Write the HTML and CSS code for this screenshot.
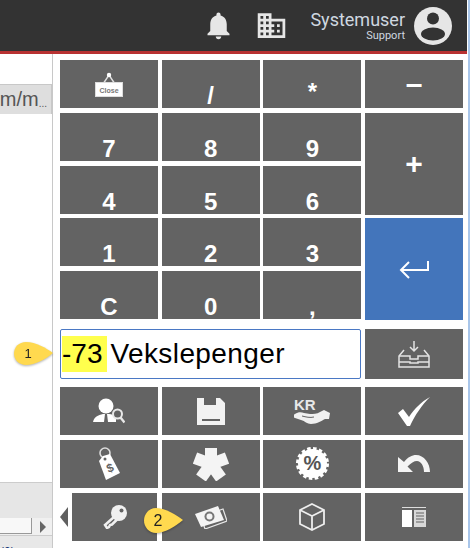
FILE: index.html
```html
<!DOCTYPE html>
<html>
<head>
    <title>Kasse</title>
    <link rel="stylesheet" href="styles.css">
</head>
<body>
    <div class="page">
        <header class="topbar">
            <svg class="bar-icon bell" viewBox="0 0 24 24"><path d="M12 22c1.1 0 2-.9 2-2h-4c0 1.1.89 2 2 2zm6-6v-5c0-3.07-1.64-5.64-4.5-6.32V4c0-.83-.67-1.5-1.5-1.5s-1.5.67-1.5 1.5v.68C7.63 5.36 6 7.92 6 11v5l-2 2v1h16v-1l-2-2z"/></svg>
            <svg class="bar-icon building" viewBox="0 0 24 24"><path d="M12 7V3H2v18h20V7H12zM6 19H4v-2h2v2zm0-4H4v-2h2v2zm0-4H4V9h2v2zm0-4H4V5h2v2zm4 12H8v-2h2v2zm0-4H8v-2h2v2zm0-4H8V9h2v2zm0-4H8V5h2v2zm10 12h-8v-2h2v-2h-2v-2h2v-2h-2V9h8v10zm-2-8h-2v2h2v-2zm0 4h-2v2h2v-2z"/></svg>
            <div class="user">
                <div class="user-name">Systemuser</div>
                <div class="user-role">Support</div>
            </div>
            <svg class="avatar" viewBox="0 0 38 38">
                <circle cx="19" cy="19" r="19" fill="#e6e6e6"/>
                <circle cx="19" cy="11.5" r="6" fill="#333"/>
                <ellipse cx="19" cy="27" rx="12" ry="6.5" fill="#333"/>
            </svg>
        </header>

        <div class="content">
            <aside class="side">
                <div class="col-head"><span>m/m</span><small>...</small></div>
                <div class="side-fill"></div>
                <div class="side-foot"></div>
                <div class="scrollbar">
                    <div class="scroll-thumb"></div>
                    <div class="scroll-arrow"></div>
                </div>
                <div class="side-status">(0)</div>
            </aside>

            <section class="pad">
                <div class="keys">
                    <div class="key">
                        <svg width="28" height="25" viewBox="0 0 28 25">
                            <path d="M8 12 14 3l6 9" fill="none" stroke="#e0e0e0" stroke-width="1.4"/>
                            <circle cx="14" cy="3" r="2.2" fill="#fff"/>
                            <rect x="0.5" y="10.5" width="27" height="14" fill="#fff" stroke="#ddd"/>
                            <text x="14" y="20.5" class="close-text">Close</text>
                        </svg>
                    </div>
                    <div class="key">/</div>
                    <div class="key key-star">*</div>
                    <div class="key key-op">–</div>
                    <div class="key">7</div>
                    <div class="key">8</div>
                    <div class="key">9</div>
                    <div class="key key-op key-tall">+</div>
                    <div class="key">4</div>
                    <div class="key">5</div>
                    <div class="key">6</div>
                    <div class="key">1</div>
                    <div class="key">2</div>
                    <div class="key">3</div>
                    <div class="key key-enter">
                        <svg width="30" height="19" viewBox="0 0 30 19" fill="none" stroke="#fff" stroke-width="2">
                            <path d="M29 1v9H2"/>
                            <path d="M10 2 2 10l8 8"/>
                        </svg>
                    </div>
                    <div class="key">C</div>
                    <div class="key">0</div>
                    <div class="key">,</div>
                </div>

                <div class="entry-row">
                    <div class="entry"><mark>-73</mark><span class="entry-name">Vekslepenger</span></div>
                    <div class="key">
                        <svg width="32" height="28" viewBox="0 0 32 28" fill="none" stroke="#e4e4e4" stroke-width="1.5">
                            <path d="M6 10 1 16v11h30V16l-5-6"/>
                            <path d="M1 16h11v3h8v-3h11"/>
                            <path d="M1 22h11v1h8v-1h11"/>
                            <path d="M16 1v10M12 7l4 4 4-4"/>
                        </svg>
                    </div>
                </div>

                <div class="keys keys-icons">
                    <div class="key">
                        <svg width="32" height="26" viewBox="0 0 32 26">
                            <circle cx="13" cy="8" r="7.5" fill="#fff"/>
                            <path d="M0 24c1-5 5-7 10-8h6c3 0 5 1 7 4v4z" fill="#fff"/>
                            <path d="M12 16h2l1 8h-4z" fill="#636363"/>
                            <circle cx="24.5" cy="16" r="4.5" fill="#636363" stroke="#e8e8e8" stroke-width="2"/>
                            <path d="m27.5 19.5 4 5" stroke="#e8e8e8" stroke-width="2.4"/>
                        </svg>
                    </div>
                    <div class="key">
                        <svg width="28" height="27" viewBox="0 0 28 27">
                            <path d="M0 0h7v7h12V0h4l5 5v22H0z" fill="#f2f2f2"/>
                            <rect x="5" y="21" width="18" height="2" fill="#636363"/>
                        </svg>
                    </div>
                    <div class="key">
                        <svg width="36" height="25" viewBox="0 0 36 25">
                            <text x="0" y="11" class="kr-text">KR</text>
                            <path d="M1 15c3-2 6-2 9-1l6 1c3 0 7 0 10-2l4-2 6 3-1 6h-4c-4 2-8 5-14 5-4 0-6-3-10-4l-6-2c-3-1-2-3 0-4z" fill="#f0f0f0"/>
                            <path d="M8 17c4 1 8 2 12 1" fill="none" stroke="#636363"/>
                        </svg>
                    </div>
                    <div class="key">
                        <svg width="32" height="29" viewBox="0 0 32 29">
                            <path d="M0 16 5 12l6 8C16 12 23 5 32 0 24 8 17 18 12 29h-3z" fill="#fff"/>
                        </svg>
                    </div>

                    <div class="key">
                        <svg width="22" height="33" viewBox="0 0 22 33">
                            <circle cx="7" cy="6" r="5" fill="none" stroke="#ddd" stroke-width="1.6"/>
                            <path d="M1 14 5 9l7-2 10 19-14 7z" fill="#fff"/>
                            <circle cx="7" cy="12" r="1.5" fill="#636363"/>
                            <text x="12" y="25" class="tag-text" transform="rotate(-22 12 21)">$</text>
                        </svg>
                    </div>
                    <div class="key">
                        <svg width="36" height="34" viewBox="0 0 36 34" fill="none" stroke="#f4f4f4" stroke-width="12">
                            <path d="M18 18V1"/>
                            <path d="M18 17 34 11"/>
                            <path d="M18 17 28 31"/>
                            <path d="M18 17 8 31"/>
                            <path d="M18 17 2 11"/>
                        </svg>
                    </div>
                    <div class="key">
                        <svg width="33" height="33" viewBox="0 0 33 33">
                            <circle cx="16.5" cy="16.5" r="14.5" fill="#fff"/>
                            <circle cx="16.5" cy="16.5" r="15" fill="none" stroke="#fff" stroke-width="3" stroke-dasharray="3.5 2.4"/>
                            <text x="16.5" y="23" class="pct-text">%</text>
                        </svg>
                    </div>
                    <div class="key">
                        <svg width="32" height="17" viewBox="0 0 32 17">
                            <path d="M0 2v15h15l-5.500-5.500C13 8 16 6 19 6c4 0 7 5 7 11h6C32 8 26 0 18 0c-4 0-8 2-12 7z" fill="#f4f4f4"/>
                        </svg>
                    </div>

                    <div class="key-wrap">
                        <div class="more-arrow"></div>
                        <div class="key">
                            <svg width="24" height="24" viewBox="0 0 24 24">
                                <circle cx="16" cy="8" r="8" fill="#f0f0f0"/>
                                <circle cx="18.5" cy="5.5" r="2" fill="#636363"/>
                                <path d="m11 12-9 8 2 3 2-1 1-2 2-.5 6-6" fill="none" stroke="#f0f0f0" stroke-width="2.5"/>
                            </svg>
                        </div>
                    </div>
                    <div class="key">
                        <svg width="32" height="24" viewBox="0 0 32 24">
                            <path d="M6 12 28 4l4 12-22 8z" fill="none" stroke="#e8e8e8" stroke-width="1.2"/>
                            <path d="M0 9 23 1l6 14-23 7z" fill="#f4f4f4"/>
                            <circle cx="14.500" cy="11.500" r="5" fill="#777"/>
                            <circle cx="14.500" cy="11.500" r="3" fill="#f4f4f4"/>
                        </svg>
                    </div>
                    <div class="key">
                        <svg width="26" height="28" viewBox="0 0 26 28" fill="none" stroke="#eee" stroke-width="1.8">
                            <path d="M13 1 25 7v14l-12 6-12-6V7z"/>
                            <path d="M1 7l12 6 12-6M13 13v14"/>
                        </svg>
                    </div>
                    <div class="key">
                        <svg width="24" height="20" viewBox="0 0 24 20">
                            <rect width="24" height="1" fill="#ddd"/>
                            <path d="M0 3h10v17H0z" fill="#fff"/>
                            <path d="M12 3h12v17H12z" fill="#d8d8d8"/>
                            <path d="M14 6h8M14 9h8M14 12h8M14 15h8" stroke="#636363"/>
                        </svg>
                    </div>
                </div>
            </section>
        </div>

        <svg class="callout callout-one" width="42" height="28" viewBox="0 0 42 28">
            <path d="M13 2C6 2 1 7 1 13.500S6 25 13 25c9 0 20-6 27-12C33 8 23 2 13 2z" fill="#ffd94f"/>
            <text x="15" y="18" class="callout-text">1</text>
        </svg>
        <svg class="callout callout-two" width="42" height="28" viewBox="0 0 42 28">
            <path d="M13 1C6 1 1 7 1 13.500S6 26 13 26c9 0 20-7 27-13C33 8 23 1 13 1z" fill="#ffd94f"/>
            <text x="15" y="19" class="callout-text callout-text-big">2</text>
        </svg>
    </div>
</body>
</html>
```

FILE: styles.css
```css
html, body {
    margin: 0;
    height: 548px;
    overflow: hidden;
    background: #fff;
}

body {
    font-family: "Liberation Sans", Arial, sans-serif;
}

.page {
    position: relative;
    width: 468px;
    height: 548px;
    border-right: 2px solid #a9c6ea;
    overflow: hidden;
}

/* top bar */
.topbar {
    width: 467px;
    height: 51px;
    background: #333;
    border-bottom: 3px solid #b83232;
    display: flex;
    align-items: center;
    box-sizing: content-box;
}

.bar-icon {
    width: 33px;
    height: 33px;
    fill: #e6e6e6;
    flex: none;
}

.bell {
    margin-left: 202px;
}

.building {
    margin-left: 20px;
}

.user {
    margin-left: 22px;
    width: 95px;
    text-align: right;
    font-family: Roboto, sans-serif;
    color: #cfd8e0;
}

.user-name {
    font-size: 18px;
    line-height: 21px;
    white-space: nowrap;
}

.user-role {
    font-size: 11px;
    line-height: 12px;
}

.avatar {
    width: 38px;
    height: 38px;
    margin-left: 9px;
    flex: none;
}

/* main area */
.content {
    display: flex;
    height: 494px;
}

.side {
    width: 52px;
    border-right: 1px solid #c8c8c8;
    flex: none;
    overflow: hidden;
}

.col-head {
    margin-top: 30px;
    height: 29px;
    background: #dedede;
    border-top: 1px solid #c8c8c8;
    border-right: 1px solid #c8c8c8;
    display: flex;
    justify-content: flex-end;
    align-items: center;
    padding-right: 4px;
    font-size: 20px;
    color: #555;
    white-space: nowrap;
}

.col-head small {
    font-size: 10px;
    margin-top: 8px;
}

.side-fill {
    height: 368px;
}

.side-foot {
    height: 35px;
    background: #e6e6e6;
    border-top: 1px solid #ccc;
}

.scrollbar {
    height: 17px;
    display: flex;
    align-items: center;
    background: #f0f0f0;
}

.scroll-thumb {
    width: 32px;
    height: 16px;
    background: #f8f8f8;
    border-right: 1px solid #999;
    border-bottom: 1px solid #999;
    box-sizing: border-box;
    margin-right: 8px;
    align-self: flex-start;
}

.scroll-arrow {
    width: 0;
    height: 0;
    border-left: 6px solid #666;
    border-top: 6px solid transparent;
    border-bottom: 6px solid transparent;
}

.side-status {
    height: 13px;
    background: #e8e8e8;
    border-top: 1px solid #ccc;
    font-size: 12px;
    line-height: 16px;
    padding-top: 8px;
    box-sizing: content-box;
    color: #1a3a7a;
}

/* keypad */
.pad {
    width: 403px;
    margin-left: 7px;
    padding-top: 6px;
    flex: none;
}

.keys {
    display: grid;
    grid-template-columns: repeat(4, 98px);
    grid-auto-rows: 48px;
    column-gap: 3.67px;
    row-gap: 4.75px;
}

.key {
    background: #636363;
    color: #fff;
    font-size: 24px;
    font-weight: bold;
    line-height: 24px;
    display: flex;
    justify-content: center;
    align-items: flex-end;
    overflow: hidden;
}

.key svg {
    align-self: center;
    flex: none;
}

.key-star {
    padding-bottom: 4px;
    box-sizing: border-box;
}

.key-op {
    align-items: center;
    font-size: 30px;
}

.key-tall {
    grid-row: span 2;
    height: 102px;
}

.key-enter {
    grid-row: span 2;
    height: 102px;
    background: #4375bb;
    align-items: center;
}

.entry-row {
    display: grid;
    grid-template-columns: 301px 98px;
    column-gap: 4px;
    height: 48px;
    margin: 10px 0;
}

.entry {
    border: 1px solid #4a78c4;
    border-radius: 2px;
    box-sizing: border-box;
    background: #fff;
    color: #000;
    font-size: 28px;
    line-height: 36px;
    padding: 6px 1px;
    white-space: nowrap;
}

.entry mark {
    background: #ffff4d;
    color: #000;
    display: inline-block;
    padding-right: 5px;
    margin-right: 3px;
}

.entry-name {
    letter-spacing: 0.4px;
}

.key-wrap {
    display: flex;
    align-items: center;
}

.key-wrap .key {
    width: 85px;
    height: 48px;
    margin-left: 4px;
}

.more-arrow {
    width: 0;
    height: 0;
    border-right: 8px solid #606060;
    border-top: 10px solid transparent;
    border-bottom: 10px solid transparent;
}

/* svg labels */
.close-text {
    font-size: 7px;
    font-weight: bold;
    fill: #777;
    text-anchor: middle;
}

.kr-text {
    font-size: 15px;
    font-weight: bold;
    fill: #e8e8e8;
}

.tag-text {
    font-size: 12px;
    font-weight: bold;
    fill: #636363;
    text-anchor: middle;
}

.pct-text {
    font-size: 20px;
    font-weight: bold;
    fill: #555;
    text-anchor: middle;
}

/* yellow markers lying over the page */
.callout {
    position: absolute;
    filter: drop-shadow(0 1px 1px rgba(0, 0, 0, 0.3));
}

.callout-one {
    left: 13px;
    top: 340px;
}

.callout-two {
    left: 143px;
    top: 507px;
}

.callout-text {
    font-size: 13px;
    fill: #222;
    text-anchor: middle;
}

.callout-text-big {
    font-size: 16px;
}
```
